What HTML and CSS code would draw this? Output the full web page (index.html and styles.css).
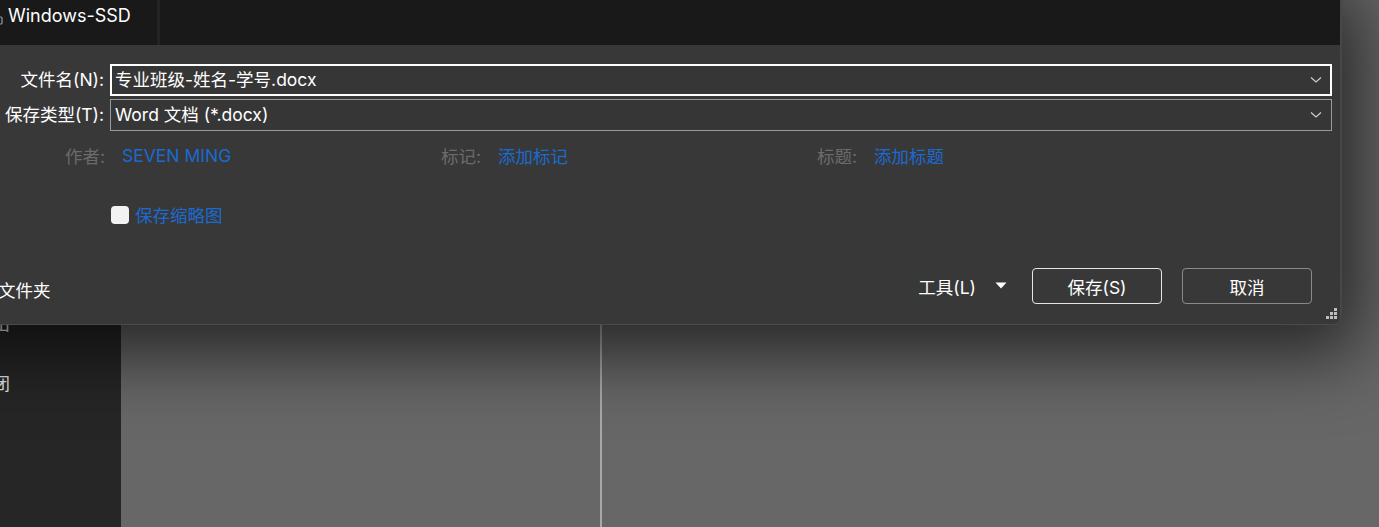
FILE: index.html
```html
<!DOCTYPE html>
<html lang="zh-CN">
<head>
<meta charset="utf-8">
<title>另存为</title>
<link rel="stylesheet" href="styles.css">
</head>
<body>
<div class="backdrop">
  <aside class="sidebar">
    <ul class="side-list">
      <li>导出</li>
      <li>关闭</li>
    </ul>
  </aside>
  <section class="pane-left"></section>
  <div class="pane-divider"></div>
  <section class="pane-right"></section>
</div>

<div class="dialog">
  <div class="topbar">
    <div class="nav-pane">
      <svg class="drive-icon" width="16" height="16" viewBox="0 0 16 16"><rect x="1" y="5" width="14" height="7" rx="1" fill="none" stroke="#9a9a9a" stroke-width="1.2"/><rect x="11" y="8" width="2" height="1.4" fill="#9a9a9a"/></svg>
      <span class="nav-text">Windows-SSD</span>
    </div>
    <div class="nav-divider"></div>
    <div class="file-pane"></div>
  </div>

  <div class="body">
    <div class="field-grid">
      <label class="field-label">文件名(N):</label>
      <div class="combo combo-focus">
        <span class="combo-text">专业班级-姓名-学号.docx</span>
        <svg class="chev" width="12" height="8" viewBox="0 0 12 8"><path d="M1 1.5 L6 6 L11 1.5" fill="none" stroke="#cfcfcf" stroke-width="1.2"/></svg>
      </div>
      <label class="field-label">保存类型(T):</label>
      <div class="combo">
        <span class="combo-text">Word 文档 (*.docx)</span>
        <svg class="chev" width="12" height="8" viewBox="0 0 12 8"><path d="M1 1.5 L6 6 L11 1.5" fill="none" stroke="#cfcfcf" stroke-width="1.2"/></svg>
      </div>
    </div>

    <div class="meta-row">
      <div class="meta"><span class="meta-label">作者:</span><span class="meta-value">SEVEN MING</span></div>
      <div class="meta"><span class="meta-label">标记:</span><span class="meta-value">添加标记</span></div>
      <div class="meta"><span class="meta-label">标题:</span><span class="meta-value">添加标题</span></div>
    </div>

    <div class="thumb-row">
      <span class="checkbox"></span>
      <span class="thumb-text">保存缩略图</span>
    </div>

    <div class="footer">
      <div class="hide-folders">
        <svg width="12" height="8" viewBox="0 0 12 8"><path d="M1 6.5 L6 2 L11 6.5" fill="none" stroke="#ffffff" stroke-width="1.2"/></svg>
        <span>隐藏文件夹</span>
      </div>
      <div class="actions">
        <div class="tools">
          <span>工具(L)</span>
          <svg class="tri" width="12" height="7" viewBox="0 0 12 7"><path d="M0.5 0.5 L11.5 0.5 L6 6.5 Z" fill="#ffffff"/></svg>
        </div>
        <button class="btn btn-primary">保存(S)</button>
        <button class="btn">取消</button>
      </div>
    </div>
  </div>

  <svg class="grip" width="12" height="12" viewBox="0 0 12 12">
    <rect x="9" y="0" width="3" height="3" fill="#bdbdbd"/>
    <rect x="5" y="4" width="3" height="3" fill="#bdbdbd"/>
    <rect x="9" y="4" width="3" height="3" fill="#bdbdbd"/>
    <rect x="1" y="8" width="3" height="3" fill="#bdbdbd"/>
    <rect x="5" y="8" width="3" height="3" fill="#bdbdbd"/>
    <rect x="9" y="8" width="3" height="3" fill="#bdbdbd"/>
  </svg>
</div>
</body>
</html>
```

FILE: styles.css
```css
* { box-sizing: border-box; }

html, body {
  margin: 0;
  padding: 0;
  width: 1379px;
  height: 527px;
  overflow: hidden;
}

body {
  background: #676767;
  font-family: Inter, "Noto Sans CJK SC", sans-serif;
  font-size: 17.5px;
  color: #ffffff;
  position: relative;
}

/* ---------- backdrop (Word backstage) ---------- */
.backdrop {
  display: grid;
  grid-template-columns: 121px 479px 2px 1fr;
  height: 527px;
}

.sidebar {
  background: #262626;
  overflow: hidden;
}

.side-list {
  list-style: none;
  margin: 0;
  padding: 296px 0 0 0;
  margin-left: -25px;
  color: #e6e6e6;
}

.side-list li {
  height: 60px;
  line-height: 56px;
}

.pane-left, .pane-right {
  background: #676767;
}

.pane-divider {
  background: #a9a9a9;
}

/* ---------- dialog ---------- */
.dialog {
  position: absolute;
  left: -60px;
  top: 0;
  width: 1402px;
  height: 325px;
  background: #383838;
  border-right: 2px solid #474747;
  border-bottom: 1px solid #4a4a4a;
  border-bottom-right-radius: 8px;
  box-shadow: 0 12px 70px 18px rgba(0, 0, 0, 0.62);
  display: flex;
  flex-direction: column;
}

.topbar {
  height: 45px;
  display: flex;
  background: #191919;
  flex: none;
}

.nav-pane {
  width: 217px;
  display: flex;
  align-items: flex-start;
  padding: 6px 0 0 47px;
  gap: 5px;
}

.drive-icon { margin-top: 6px; }

.nav-text {
  font-size: 18px;
  line-height: 20px;
  color: #ffffff;
}

.nav-divider {
  width: 3px;
  background: #232323;
}

.file-pane { flex: 1; }

.body {
  flex: 1;
  padding: 19px 8px 0 0;
  display: flex;
  flex-direction: column;
}

.field-grid {
  display: grid;
  grid-template-columns: 164px 1fr;
  column-gap: 6px;
  row-gap: 3px;
  align-items: center;
}

.field-label {
  text-align: right;
  white-space: nowrap;
  color: #ffffff;
  line-height: 20px;
}

.combo {
  height: 32px;
  border: 1px solid #9b9b9b;
  background: #363636;
  display: flex;
  align-items: center;
  justify-content: space-between;
  padding: 0 9px 0 4px;
}

.combo-focus {
  border: 2px solid #ffffff;
  padding-left: 3px;
  padding-right: 8px;
}

.combo-text {
  line-height: 20px;
  white-space: nowrap;
}

.meta-row {
  display: flex;
  padding-left: 125px;
  margin-top: 13px;
  height: 22px;
  align-items: center;
}

.meta {
  width: 376px;
  display: flex;
  align-items: center;
}

.meta-label {
  color: #6b6b6b;
  width: 57px;
  white-space: nowrap;
}

.meta-value {
  color: #1b6ad0;
  white-space: nowrap;
}

.thumb-row {
  display: flex;
  align-items: center;
  margin-top: 37px;
  padding-left: 171px;
  gap: 6px;
  height: 22px;
}

.checkbox {
  width: 18px;
  height: 18px;
  border-radius: 4px;
  background: #f2f2f2;
  margin-top: 2px;
}

.thumb-text {
  color: #1b6ad0;
}

.footer {
  display: flex;
  justify-content: space-between;
  align-items: center;
  margin-top: 43px;
  padding-right: 20px;
  height: 36px;
}

.hide-folders {
  display: flex;
  align-items: center;
  gap: 12px;
  margin-left: -1px;
  margin-top: 6px;
}

.actions {
  display: flex;
  align-items: center;
  gap: 20px;
}

.tools {
  display: flex;
  align-items: center;
  gap: 19px;
  margin-right: 5px;
}

.tri { margin-top: -2px; }

.btn {
  width: 130px;
  height: 36px;
  border: 1px solid #8a8a8a;
  border-radius: 4px;
  background: #383838;
  color: #ffffff;
  font-family: Inter, "Noto Sans CJK SC", sans-serif;
  font-size: 17.5px;
  padding: 0;
}

.btn-primary {
  border-color: #e6e6e6;
}

.grip {
  position: absolute;
  right: 3px;
  bottom: 4px;
}
```
